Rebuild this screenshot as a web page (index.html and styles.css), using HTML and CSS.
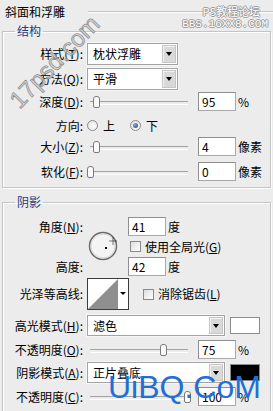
FILE: index.html
```html
<!DOCTYPE html>
<html lang="zh">

<head>
    <meta charset="utf-8">
    <title>斜面和浮雕</title>
    <link rel="stylesheet" href="styles.css">
</head>

<body>
    <!-- 标题 -->
    <div class="title"><span>斜面和浮雕</span><i class="rule"></i></div>

    <!-- 结构 -->
    <fieldset class="group g1">
        <legend>结构</legend>
        <div class="row r-sel1">
            <label class="lbl">样式(<u>T</u>):</label>
            <div class="select short"><span>枕状浮雕</span><b class="drop"></b></div>
        </div>
        <div class="row r-sel2">
            <label class="lbl">方法(<u>Q</u>):</label>
            <div class="select short"><span>平滑</span><b class="drop"></b></div>
        </div>
        <div class="row r-depth">
            <label class="lbl">深度(<u>D</u>):</label>
            <div class="slider"><i class="thumb" style="left:6px"></i></div>
            <span class="num">95</span><span class="unit">%</span>
        </div>
        <div class="row r-dir">
            <label class="lbl">方向:</label>
            <span class="radio"></span><span class="rtext">上</span>
            <span class="radio on"></span><span class="rtext">下</span>
        </div>
        <div class="row r-size">
            <label class="lbl">大小(<u>Z</u>):</label>
            <div class="slider"><i class="thumb" style="left:6px"></i></div>
            <span class="num">4</span><span class="unit">像素</span>
        </div>
        <div class="row r-soft">
            <label class="lbl">软化(<u>F</u>):</label>
            <div class="slider"><i class="thumb" style="left:0px"></i></div>
            <span class="num">0</span><span class="unit">像素</span>
        </div>
    </fieldset>

    <!-- 阴影 -->
    <fieldset class="group g2">
        <legend>阴影</legend>
        <div class="angle">
            <div class="lbl-col">
                <label>角度(<u>N</u>):</label>
                <label>高度:</label>
            </div>
            <svg class="dial" width="30" height="30" viewBox="0 0 30 30">
                <circle cx="15" cy="15" r="13.5" fill="#f4f4f4" stroke="#6a6a6a" stroke-width="1.5"/>
                <circle cx="15" cy="15" r="12" fill="none" stroke="#d8d8d8" stroke-width="1"/>
                <rect x="17" y="16" width="2" height="2" fill="#000"/>
                <path d="M25 6.5v7M21.5 10h7" stroke="#000" stroke-width="1" stroke-dasharray="1 1"/>
            </svg>
            <div class="angle-ctrl">
                <div class="line"><span class="num first">41</span><span class="unit">度</span></div>
                <label class="check"><i class="box"></i>使用全局光(<u>G</u>)</label>
                <div class="line"><span class="num first">42</span><span class="unit">度</span></div>
            </div>
        </div>
        <div class="row r-contour">
            <label class="lbl">光泽等高线:</label>
            <div class="contour">
                <svg width="30" height="30" viewBox="0 0 30 30">
                    <polygon points="0,30 30,0 30,30" fill="#8f8f8f"/>
                </svg>
                <span class="carrow"></span>
            </div>
            <label class="check aa"><i class="box"></i>消除锯齿(<u>L</u>)</label>
        </div>
        <div class="row r-hmode">
            <label class="lbl">高光模式(<u>H</u>):</label>
            <div class="select long"><span>滤色</span><b class="drop"></b></div>
            <span class="swatch white"></span>
        </div>
        <div class="row r-op1">
            <label class="lbl">不透明度(<u>O</u>):</label>
            <div class="slider"><i class="thumb" style="left:73px"></i></div>
            <span class="num">75</span><span class="unit">%</span>
        </div>
        <div class="row r-smode">
            <label class="lbl">阴影模式(<u>A</u>):</label>
            <div class="select long"><span>正片叠底</span><b class="drop"></b></div>
            <span class="swatch black"></span>
        </div>
        <div class="row r-op2">
            <label class="lbl">不透明度(<u>C</u>):</label>
            <div class="slider"><i class="thumb" style="left:97px"></i></div>
            <span class="num">100</span><span class="unit">%</span>
        </div>
    </fieldset>

    <!-- 水印 -->
    <div class="wm wm-17">17psd.com</div>
    <div class="wm wm-bbs"><span>PS教程论坛</span><span class="mono">BBS.16XX8.COM</span></div>
    <div class="wm wm-uibq">UiBQ.CoM</div>
</body>
</html>
```

FILE: styles.css
```css
/* 图层样式面板 */
* {
    box-sizing: border-box;
}

body {
    margin: 0;
    width: 273px;
    height: 411px;
    overflow: hidden;
    position: relative;
    background: #ececec;
    color: #000;
    font-family: "Noto Sans CJK SC", "Liberation Sans", sans-serif;
    font-size: 12px;
    line-height: 16px;
}

u {
    text-decoration: underline;
}

.title {
    height: 23px;
    display: flex;
    align-items: center;
    padding-left: 5px;
}

.rule {
    flex: 1;
    height: 2px;
    margin-left: 23px;
    border-top: 1px solid #c2c2c2;
    border-bottom: 1px solid #fff;
}

/* 分组框 */
.group {
    margin: 0 2px;
    padding: 0 0 6px 0;
    min-width: 0;
    border: 1px solid #c4c4c4;
    box-shadow: inset 1px 1px 0 #fff, 1px 1px 0 #fff;
}

.group legend {
    margin-left: 12px;
    padding: 0 2px;
    line-height: 16px;
    color: #1d3b80;
}

.g2 {
    margin-top: 6px;
    height: 218px;
    padding-bottom: 0;
}

.row {
    display: flex;
    align-items: center;
}

.lbl {
    width: 80px;
    margin-right: 4px;
    text-align: right;
    flex: none;
}

.r-sel1 { margin-top: 4px; height: 22px; }
.r-sel2 { margin-top: 3px; height: 22px; }
.r-depth { margin-top: 2px; height: 19px; }
.r-dir { margin-top: 5px; height: 19px; }
.r-size { margin-top: 2px; height: 19px; }
.r-soft { margin-top: 6px; height: 19px; }

/* 下拉框 */
.select {
    height: 22px;
    display: flex;
    flex: none;
    background: #fff;
    border: 1px solid #a4a4a4;
    box-shadow: 0 0 0 1px #f6f6f6;
}

.select.short {
    width: 91px;
}

.select.long {
    width: 138px;
    height: 21px;
}

.select span {
    flex: 1;
    padding-left: 5px;
    line-height: 19px;
}

.drop {
    width: 14px;
    margin: 1px;
    background: #d9d9d9;
    border: 1px solid #c6c6c6;
    box-shadow: inset 1px 1px 0 #f2f2f2;
    display: flex;
    align-items: center;
    justify-content: center;
}

.drop::after {
    content: "";
    border-left: 3px solid transparent;
    border-right: 3px solid transparent;
    border-top: 4px solid #000;
}

/* 滑块 */
.slider {
    width: 103px;
    height: 19px;
    position: relative;
    flex: none;
}

.slider::before {
    content: "";
    position: absolute;
    left: 3px;
    right: 2px;
    top: 9px;
    height: 2px;
    border-top: 1px solid #a2a2a2;
    border-bottom: 1px solid #fff;
}

.thumb {
    position: absolute;
    top: 4px;
    width: 7px;
    height: 12px;
    background: #fafafa;
    border: 1px solid #7a7a7a;
    border-radius: 3px 3px 2px 2px;
}

.num {
    width: 38px;
    height: 19px;
    margin-left: 8px;
    padding-left: 3px;
    line-height: 17px;
    background: #fff;
    border: 1px solid #a8a8a8;
    border-top-color: #8e8e8e;
    border-left-color: #8e8e8e;
    flex: none;
}

.unit {
    margin-left: 2px;
}

/* 单选 */
.radio {
    width: 11px;
    height: 11px;
    border-radius: 50%;
    border: 1px solid #8a8a8a;
    background: radial-gradient(circle at 60% 60%, #fff, #dcdcdc);
    display: flex;
    align-items: center;
    justify-content: center;
    flex: none;
}

.radio.on::after {
    content: "";
    width: 5px;
    height: 5px;
    border-radius: 50%;
    background: radial-gradient(circle at 35% 35%, #8aa6d6, #24407c);
}

.rtext {
    margin-left: 5px;
    margin-right: 15px;
}

/* 角度 */
.angle {
    display: flex;
    margin-top: 7px;
    height: 59px;
}

.lbl-col {
    width: 80px;
    margin-right: 5px;
    display: flex;
    flex-direction: column;
    justify-content: space-between;
    align-items: flex-end;
    line-height: 19px;
}

.dial {
    margin-top: 14px;
    flex: none;
}

.angle-ctrl {
    margin-left: 10px;
    display: flex;
    flex-direction: column;
    justify-content: space-between;
}

.line {
    display: flex;
    align-items: center;
}

.num.first {
    margin-left: 0;
}

.check {
    display: flex;
    align-items: center;
    height: 17px;
}

.box {
    width: 11px;
    height: 11px;
    margin-left: 2px;
    margin-right: 4px;
    border: 1px solid #8a8a8a;
    background: linear-gradient(135deg, #dedede, #fff);
}

.check.aa {
    margin-left: 12px;
}

/* 等高线 */
.r-contour {
    margin-top: 2px;
    height: 32px;
}

.contour {
    width: 42px;
    height: 32px;
    display: flex;
    border: 1px solid #3c3c3c;
    background: #fff;
    flex: none;
}

.carrow {
    flex: 1;
    display: flex;
    justify-content: center;
    padding-top: 13px;
}

.carrow::after {
    content: "";
    height: 0;
    border-left: 3px solid transparent;
    border-right: 3px solid transparent;
    border-top: 3px solid #000;
}

.r-hmode { margin-top: 5px; height: 21px; }
.r-op1 { margin-top: 4px; height: 19px; }
.r-smode { margin-top: 3px; height: 21px; }
.r-op2 { margin-top: 4px; height: 19px; }

.swatch {
    width: 30px;
    height: 17px;
    margin-left: 5px;
    border: 1px solid #8c8c8c;
    flex: none;
}

.swatch.white {
    background: #fff;
}

.swatch.black {
    background: #000;
}

/* 水印 */
.wm {
    position: absolute;
    pointer-events: none;
}

.wm-17 {
    left: -4px;
    top: 48px;
    font-family: "Liberation Sans", sans-serif;
    font-size: 24px;
    line-height: 28px;
    color: rgba(200, 200, 200, 0.7);
    -webkit-text-stroke: 0.7px #8a8a8a;
    transform: rotate(-46deg);
}

.wm-bbs {
    right: 5px;
    top: 5px;
    display: flex;
    flex-direction: column;
    align-items: flex-end;
    font-size: 11px;
    line-height: 13px;
    color: #fff;
    text-shadow: 1px 0 #9a9a9a, -1px 0 #9a9a9a, 0 1px #9a9a9a, 0 -1px #9a9a9a;
}

.wm-bbs span:first-child {
    margin-right: 8px;
}

.mono {
    font-family: "Liberation Mono", monospace;
}

.wm-uibq {
    left: 108px;
    top: 371px;
    font-family: "Liberation Sans", sans-serif;
    font-size: 32px;
    line-height: 32px;
    color: #1f6fd6;
}
```
